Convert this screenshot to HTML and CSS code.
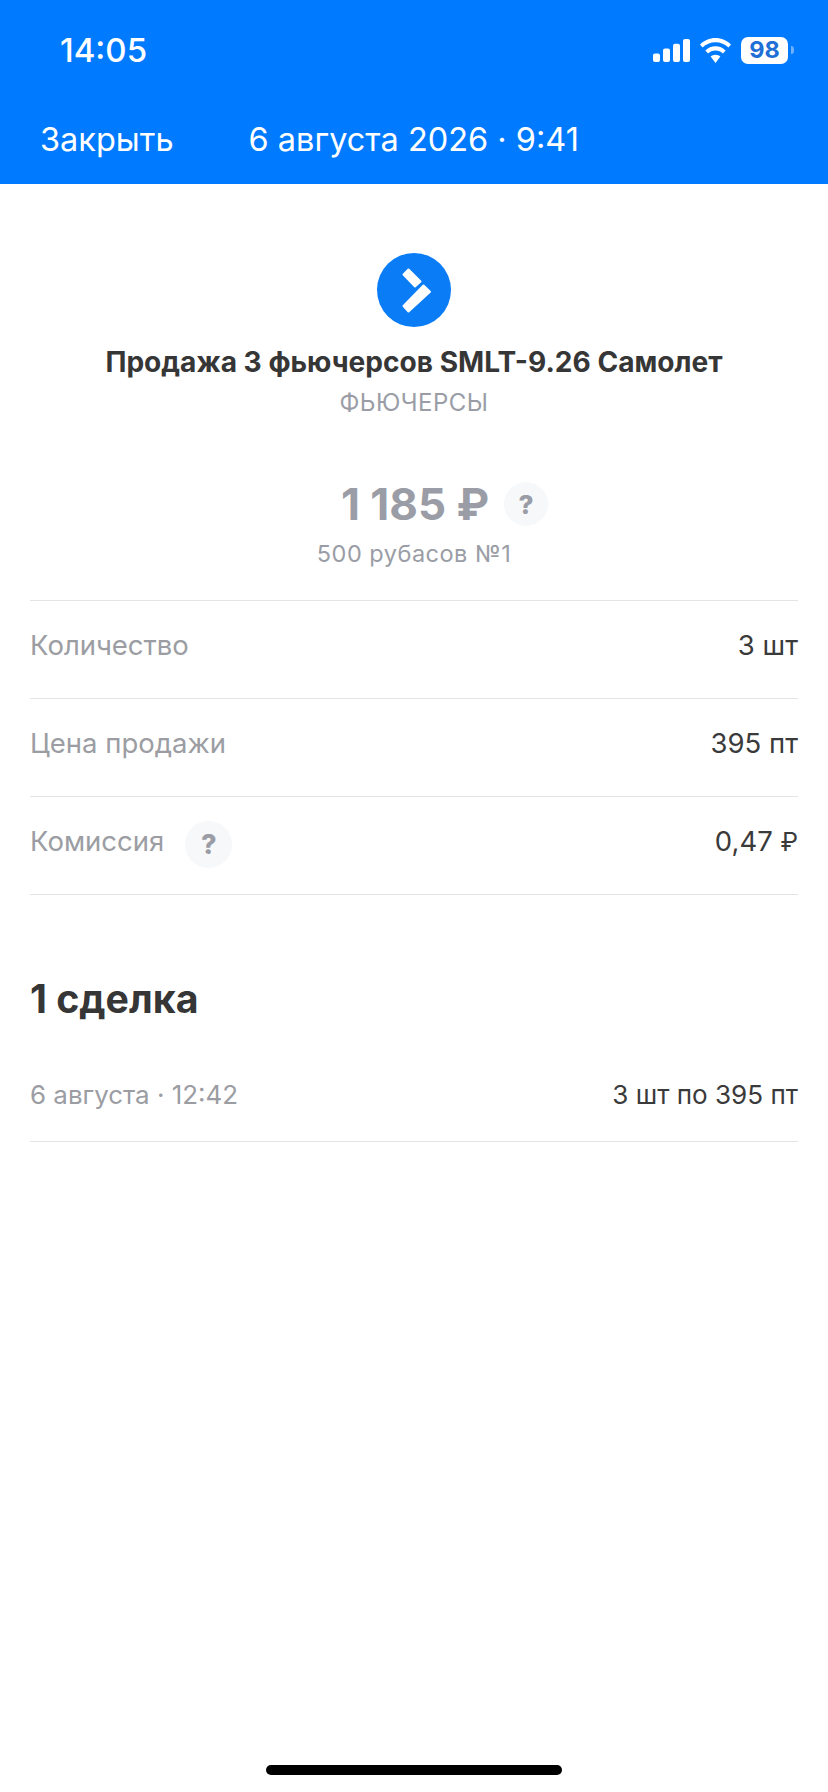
FILE: index.html
```html
<!DOCTYPE html>
<html lang="ru">
<head>
<meta charset="utf-8">
<title>Операция</title>
<link rel="stylesheet" href="styles.css">
</head>
<body>
<header class="top">
  <div class="status">
    <span class="time">14:05</span>
    <div class="status-icons">
      <svg class="signal" width="37" height="23" viewBox="0 0 37 24" preserveAspectRatio="none"><rect x="0" y="15" width="7" height="9" rx="2"/><rect x="10" y="10" width="7" height="14" rx="2"/><rect x="20" y="5" width="7" height="19" rx="2"/><rect x="30" y="0" width="7" height="24" rx="2"/></svg>
      <svg class="wifi" width="31" height="25" viewBox="2.700 1 26.600 21" preserveAspectRatio="none"><path d="M16 4.500c4.300 0 8.200 1.700 11.100 4.400l2.200-2.400C25.800 3.100 21.100 1 16 1S6.200 3.100 2.700 6.500l2.200 2.400C7.800 6.200 11.700 4.500 16 4.500z"/><path d="M16 11.500c2.500 0 4.700 1 6.400 2.500l2.300-2.500C22.400 9.300 19.400 8 16 8s-6.400 1.300-8.700 3.500l2.300 2.500c1.700-1.500 3.900-2.500 6.400-2.500z"/><path d="M16 15c-1.600 0-3.100.6-4.200 1.600L16 22l4.200-5.400C19.100 15.600 17.600 15 16 15z"/></svg>
      <div class="battery"><span class="battery-level">98</span></div>
      <span class="battery-cap"></span>
    </div>
  </div>
  <nav class="nav">
    <span class="close">Закрыть</span>
    <span class="date">6 августа 2026 · 9:41</span>
  </nav>
</header>
<main class="content">
  <section class="hero">
    <svg class="logo" width="74" height="74" viewBox="0 0 74 74">
      <circle cx="37" cy="37" r="37" fill="#0a7cf5"/>
      <polygon class="mark" points="26.500,21.500 31.500,16.500 43.500,28.500 38,33.500"/>
      <polygon class="mark" points="46.500,32.500 53,38.700 31.500,58.500 26.500,53"/>
    </svg>
    <h1 class="title">Продажа 3 фьючерсов SMLT-9.26 Самолет</h1>
    <p class="kind">ФЬЮЧЕРСЫ</p>
  </section>
  <section class="sum">
    <div class="sum-row">
      <span class="amount">1 185 ₽</span>
      <span class="help help-sum">?</span>
    </div>
    <p class="account">500 рубасов №1</p>
  </section>
  <ul class="rows">
    <li class="row"><span class="label">Количество</span><span class="value">3 шт</span></li>
    <li class="row"><span class="label">Цена продажи</span><span class="value">395 пт</span></li>
    <li class="row"><span class="label label-help">Комиссия<span class="help help-row">?</span></span><span class="value">0,47 <span class="rub">₽</span></span></li>
  </ul>
  <h2 class="deals">1 сделка</h2>
  <div class="row deal"><span class="label label-small">6 августа · 12:42</span><span class="value value-small">3 шт по 395 пт</span></div>
</main>
<div class="home"></div>
</body>
</html>
```
FILE: styles.css
```css
* { box-sizing: border-box; margin: 0; padding: 0; }
html, body { height: 100%; }
body {
  position: relative;
  width: 828px;
  height: 1792px;
  overflow: hidden;
  background: #fff;
  color: #333;
  font-family: Inter, "Liberation Sans", sans-serif;
}
.top { height: 184px; background: #007aff; color: #fff; }
.status {
  height: 100px;
  padding: 0 34px 0 60px;
  display: flex;
  justify-content: space-between;
  align-items: center;
}
.time { font-size: 33px; font-weight: 500; line-height: 1; }
.status-icons { display: flex; align-items: center; }
.signal { fill: #fff; }
.wifi { fill: #fff; margin-left: 10px; }
.battery {
  margin-left: 10px;
  width: 47px;
  height: 27px;
  border-radius: 7px;
  background: #fff;
  display: flex;
  align-items: center;
  justify-content: center;
}
.battery-level { color: #1f6fd6; font-size: 23.500px; font-weight: 700; line-height: 1; }
.battery-cap {
  width: 3px;
  height: 8px;
  margin-left: 3px;
  border-radius: 0 3px 3px 0;
  background: #6fb1ff;
}
.nav {
  height: 84px;
  padding: 0 0 5px 40px;
  display: flex;
  align-items: center;
  font-size: 32.500px;
  line-height: 1.2;
}
.date { margin-left: 75px; }
.content { padding: 0 30px; }
.hero { padding-top: 69px; display: flex; flex-direction: column; align-items: center; }
.mark { fill: #fff; stroke: #fff; stroke-width: 2; stroke-linejoin: round; }
.title { margin-top: 17px; font-size: 28.100px; line-height: 36px; font-weight: 700; white-space: nowrap; color: #363636; }
.kind { margin-top: 8px; font-size: 24px; line-height: 30px; color: #9a9da6; letter-spacing: .5px; }
.sum { margin-top: 60px; display: flex; flex-direction: column; align-items: center; }
.sum-row { display: flex; align-items: center; margin-left: 61px; }
.amount { font-size: 44px; line-height: 52px; font-weight: 700; color: #9a9da6; }
.help {
  display: flex;
  align-items: center;
  justify-content: center;
  border-radius: 50%;
  background: #f7f8f9;
  color: #9a9da6;
  font-weight: 800;
}
.help-sum { width: 44px; height: 44px; margin-left: 15px; font-size: 26px; }
.account { margin-top: 8px; font-size: 23.500px; line-height: 32px; color: #9a9da6; letter-spacing: .5px; }
.rows { margin-top: 30px; list-style: none; border-top: 1px solid #e3e4e7; }
.row {
  height: 98px;
  padding-bottom: 9px;
  display: flex;
  justify-content: space-between;
  align-items: center;
  border-bottom: 1px solid #e3e4e7;
  font-size: 27.500px;
}
.label { color: #9b9da3; }
.label-help { display: flex; align-items: center; }
.help-row { width: 47px; height: 47px; margin: 7px 0 0 21px; font-size: 27px; }
.value { color: #3a3a3a; }
.rub { font-size: 25px; }
.deals { margin-top: 80px; font-size: 39.300px; line-height: 48px; font-weight: 700; color: #363636; }
.deal { margin-top: 25px; height: 94px; padding-bottom: 0; }
.label-small { font-size: 25.900px; }
.value-small { font-size: 26.100px; }
.home {
  position: absolute;
  left: 266px;
  bottom: 17px;
  width: 296px;
  height: 10px;
  border-radius: 5px;
  background: #000;
}
```
